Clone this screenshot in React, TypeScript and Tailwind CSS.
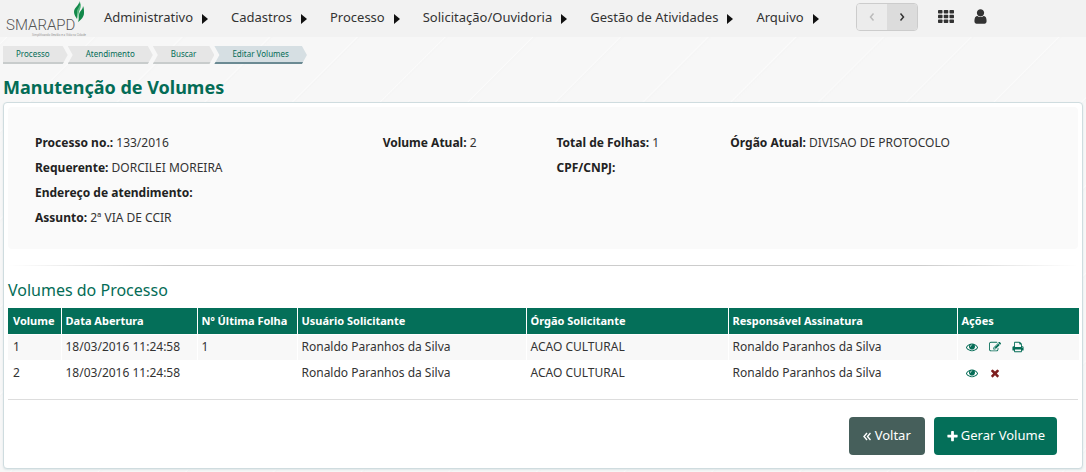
import type { ReactNode } from 'react'
import clsx from 'clsx'

const menuItems = [
  'Administrativo',
  'Cadastros',
  'Processo',
  'Solicitação/Ouvidoria',
  'Gestão de Atividades',
  'Arquivo',
]

const breadcrumbs = ['Processo', 'Atendimento', 'Buscar', 'Editar Volumes']

type Volume = {
  numero: number
  dataAbertura: string
  ultimaFolha: string
  usuario: string
  orgao: string
  responsavel: string
  aberto: boolean
}

const volumes: Volume[] = [
  {
    numero: 1,
    dataAbertura: '18/03/2016 11:24:58',
    ultimaFolha: '1',
    usuario: 'Ronaldo Paranhos da Silva',
    orgao: 'ACAO CULTURAL',
    responsavel: 'Ronaldo Paranhos da Silva',
    aberto: false,
  },
  {
    numero: 2,
    dataAbertura: '18/03/2016 11:24:58',
    ultimaFolha: '',
    usuario: 'Ronaldo Paranhos da Silva',
    orgao: 'ACAO CULTURAL',
    responsavel: 'Ronaldo Paranhos da Silva',
    aberto: true,
  },
]

const icons = {
  eye: 'M1664 960q-152-236-381-353 61 104 61 225 0 185-131.5 316.5t-316.5 131.5-316.5-131.5-131.5-316.5q0-121 61-225-229 117-381 353 133 205 333.5 326.5t434.5 121.5 434.5-121.5 333.5-326.5zm-720-384q0-20-14-34t-34-14q-125 0-214.5 89.5t-89.5 214.5q0 20 14 34t34 14 34-14 14-34q0-86 61-147t147-61q20 0 34-14t14-34zm848 384q0 34-20 69-140 230-376.5 368.5t-499.5 138.5-499.5-139-376.5-368q-20-35-20-69t20-69q140-229 376.5-368t499.5-139 499.5 139 376.5 368q20 35 20 69z',
  edit: 'M888 1184l116-116-152-152-116 116v56h96v96h56zm440-720q-16-16-33 1l-350 350q-17 17-1 33t33-1l350-350q17-17 1-33zm80 594v190q0 119-84.5 203.5t-203.5 84.5h-832q-119 0-203.5-84.5t-84.5-203.5v-832q0-119 84.5-203.5t203.5-84.5h832q63 0 117 25 15 7 18 23 3 17-9 29l-49 49q-14 14-32 8-23-6-45-6h-832q-66 0-113 47t-47 113v832q0 66 47 113t113 47h832q66 0 113-47t47-113v-126q0-13 9-22l64-64q15-15 35-7t20 29zm-96-738l288 288-672 672h-288v-288zm444 132l-92 92-288-288 92-92q28-28 68-28t68 28l152 152q28 28 28 68t-28 68z',
  print:
    'M448 1536h896v-256h-896v256zm0-640h896v-384h-160q-40 0-68-28t-28-68v-160h-640v640zm1152 64q0-26-19-45t-45-19-45 19-19 45 19 45 45 19 45-19 19-45zm128 0v416q0 13-9.5 22.5t-22.5 9.5h-224v160q0 40-28 68t-68 28h-960q-40 0-68-28t-28-68v-160h-224q-13 0-22.5-9.5t-9.5-22.5v-416q0-79 56.5-135.5t135.5-56.5h64v-544q0-40 28-68t68-28h672q40 0 88 20t76 48l152 152q28 28 48 76t20 88v256h64q79 0 135.5 56.5t56.5 135.5z',
  times:
    'M1490 1322q0 40-28 68l-136 136q-28 28-68 28t-68-28l-294-294-294 294q-28 28-68 28t-68-28l-136-136q-28-28-28-68t28-68l294-294-294-294q-28-28-28-68t28-68l136-136q28-28 68-28t68 28l294 294 294-294q28-28 68-28t68 28l136 136q28 28 28 68t-28 68l-294 294 294 294q28 28 28 68z',
  plus: 'M1600 736v192q0 40-28 68t-68 28h-416v416q0 40-28 68t-68 28h-192q-40 0-68-28t-28-68v-416h-416q-40 0-68-28t-28-68v-192q0-40 28-68t68-28h416v-416q0-40 28-68t68-28h192q40 0 68 28t28 68v416h416q40 0 68 28t28 68z',
  user: 'M1536 1399q0 109-62.5 187t-150.5 78h-854q-88 0-150.5-78t-62.5-187q0-85 8.5-160.5t31.5-152 58.5-131 94-89 134.5-34.5q131 128 313 128t313-128q76 0 134.5 34.5t94 89 58.5 131 31.5 152 8.5 160.5zm-256-887q0 159-112.5 271.5t-271.5 112.5-271.5-112.5-112.5-271.5 112.5-271.5 271.5-112.5 271.5 112.5 112.5 271.5z',
}

function Icon({ name, className }: { name: keyof typeof icons; className?: string }) {
  return (
    <svg viewBox="0 0 1792 1792" fill="currentColor" aria-hidden="true" className={className}>
      <path d={icons[name]} />
    </svg>
  )
}

function Chevron({ d }: { d: string }) {
  return (
    <svg viewBox="0 0 8 10" className="h-[10px] w-2" aria-hidden="true">
      <path d={d} fill="none" stroke="currentColor" strokeWidth="1.5" />
    </svg>
  )
}

function Logo() {
  return (
    <a href="#" aria-label="SMARAPD" className="flex h-[37px] w-[98px] shrink-0 items-start">
      <svg viewBox="0 0 84 37" className="h-[37px] w-[84px]">
        <text x="0" y="30" fontSize="15" fontWeight="300" fill="#555" fontFamily="Roboto, sans-serif">
          SMARAPD
        </text>
        <text x="26" y="36" fontSize="3" fill="#999" fontFamily="Roboto, sans-serif">
          Simplificando Gestão e a Vida na Cidade
        </text>
        {/* flame */}
        <path d="M73 1c1 4-5 6-5 11 0 3 2 5 3 7 1-4-1-6 1-9 2-3 3-5 1-9z" fill="#12884a" />
        <path d="M77 6c0 4-4 5-4 9 0 3 0 4-1 7 3-2 6-5 6-9 0-3 0-5-1-7z" fill="#12884a" />
        <path d="M74 2c1 4-3 6-3 10 0 3 1 5 1 8 1-3 0-5 1-8 1-3 3-6 1-10z" fill="#52b47c" />
      </svg>
    </a>
  )
}

function Header() {
  return (
    <header className="flex h-[37px] items-center bg-[#f2f2f2] pl-[6px] text-[#333]">
      <Logo />
      <nav className="flex items-center gap-[23px] pb-1">
        {menuItems.map((item) => (
          <a key={item} href="#" className="flex items-center gap-[9px] whitespace-nowrap text-[13px] leading-5">
            {item}
            <svg viewBox="0 0 6 10" className="mt-1 h-[10px] w-[6px]" aria-hidden="true">
              <path d="M0 0l6 5-6 5z" fill="#111" />
            </svg>
          </a>
        ))}
      </nav>
      <div className="ml-[37px] flex h-7 w-[62px] shrink-0 self-start overflow-hidden rounded border border-[#ccc] mt-[3px]">
        <button type="button" aria-label="Anterior" disabled className="flex flex-1 items-center justify-center bg-[#ececec] text-[#bbb]">
          <Chevron d="M5.5 1.5L2.5 5l3 3.5" />
        </button>
        <button type="button" aria-label="Próximo" className="flex flex-1 items-center justify-center bg-[#dcdcdc] text-[#333]">
          <Chevron d="M2.5 1.5L5.5 5l-3 3.5" />
        </button>
      </div>
      <button type="button" aria-label="Aplicativos" className="ml-5 shrink-0 pb-1">
        <svg viewBox="0 0 16 13" className="h-[13px] w-4" fill="currentColor" aria-hidden="true">
          {[0, 4.75, 9.5].map((y) =>
            [0, 5.75, 11.5].map((x) => <rect key={`${x}-${y}`} x={x} y={y} width="4.5" height="3.5" rx="0.7" />),
          )}
        </svg>
      </button>
      <button type="button" aria-label="Usuário" className="ml-[18px] shrink-0 pb-1">
        <Icon name="user" className="size-[17px]" />
      </button>
    </header>
  )
}

function Breadcrumbs() {
  return (
    <nav aria-label="Trilha" className="flex px-[3px] pt-[9px] text-[8px] leading-4 text-[#046c56]">
      {breadcrumbs.map((item, index) => (
        <a
          key={item}
          href="#"
          className={clsx(
            'border-b-2 pr-[18px]',
            index === 0
              ? 'pl-[13px] [clip-path:polygon(0_0,calc(100%-5px)_0,100%_50%,calc(100%-5px)_100%,0_100%)]'
              : 'pl-[18px] [clip-path:polygon(0_0,calc(100%-5px)_0,100%_50%,calc(100%-5px)_100%,0_100%,5px_50%)]',
            index === breadcrumbs.length - 1 ? 'border-[#6b8a93] bg-[#d6dfe3]' : 'border-[#c8cccc] bg-[#e6e6e6]',
          )}
        >
          {item}
        </a>
      ))}
    </nav>
  )
}

function Field({ label, children, className }: { label: string; children?: ReactNode; className: string }) {
  return (
    <div className={className}>
      <dt className="inline font-bold text-[#222]">{label}</dt> <dd className="inline">{children}</dd>
    </div>
  )
}

function ActionButton({ icon, label, danger }: { icon: keyof typeof icons; label: string; danger?: boolean }) {
  return (
    <button type="button" aria-label={label} className={danger ? 'text-[#7d1f1f]' : 'text-[#046c56]'}>
      <Icon name={icon} className="size-3" />
    </button>
  )
}

function VolumesTable() {
  return (
    <table className="w-full table-fixed text-left text-[12px] leading-4 text-[#333]">
      <colgroup>
        <col className="w-[53px]" />
        <col className="w-[136px]" />
        <col className="w-[100px]" />
        <col className="w-[229px]" />
        <col className="w-[202px]" />
        <col className="w-[229px]" />
        <col className="w-[122px]" />
      </colgroup>
      <thead className="bg-[#046f59] text-[11px] text-white">
        <tr className="[&>th]:h-[26px] [&>th]:whitespace-nowrap [&>th]:border-b [&>th]:border-l [&>th]:border-white [&>th]:pl-1 [&>th:first-child]:border-l-0 [&>th:first-child]:pl-[5px]">
          <th>Volume</th>
          <th>Data Abertura</th>
          <th>Nº Última Folha</th>
          <th>Usuário Solicitante</th>
          <th>Órgão Solicitante</th>
          <th>Responsável Assinatura</th>
          <th>Ações</th>
        </tr>
      </thead>
      <tbody>
        {volumes.map((v) => (
          <tr
            key={v.numero}
            className="odd:bg-[#f8f8f8] [&>td]:h-[26px] [&>td]:whitespace-nowrap [&>td]:border-l [&>td]:border-white [&>td]:pl-1 [&>td:first-child]:border-l-0 [&>td:first-child]:pl-[5px]"
          >
            <td>{v.numero}</td>
            <td>{v.dataAbertura}</td>
            <td>{v.ultimaFolha}</td>
            <td>{v.usuario}</td>
            <td>{v.orgao}</td>
            <td>{v.responsavel}</td>
            <td>
              <div className="flex items-center gap-[11px] pl-1">
                <ActionButton icon="eye" label="Visualizar" />
                {v.aberto ? (
                  <ActionButton icon="times" label="Excluir" danger />
                ) : (
                  <>
                    <ActionButton icon="edit" label="Editar" />
                    <ActionButton icon="print" label="Imprimir" />
                  </>
                )}
              </div>
            </td>
          </tr>
        ))}
      </tbody>
    </table>
  )
}

export default function App() {
  return (
    <div className="min-h-screen bg-[#f7f7f7] bg-[repeating-linear-gradient(135deg,#f7f7f7_0,#f7f7f7_30px,#fbfbfb_31px,#f5f5f5_32px,#f7f7f7_34px,#f7f7f7_62px)] pb-1 font-['Noto_Sans','Open_Sans',sans-serif]">
      <Header />
      <Breadcrumbs />
      <h1 className="px-[3px] pt-[11px] pb-[3px] text-[18px] leading-6 font-bold text-[#046c56]">
        Manutenção de Volumes
      </h1>

      <main className="mx-[3px] rounded border border-[#cfdcdf] bg-white px-1 pt-1 shadow-[0_1px_2px_#dde5e7]">
        <dl className="grid min-h-[142px] grid-cols-12 content-start rounded bg-[#fafafa] pt-[23px] pl-[27px] text-[12px] leading-[25px] text-[#333]">
          <Field label="Processo no.:" className="col-span-4">
            133/2016
          </Field>
          <Field label="Volume Atual:" className="col-span-2">
            2
          </Field>
          <Field label="Total de Folhas:" className="col-span-2">
            1
          </Field>
          <Field label="Órgão Atual:" className="col-span-4">
            DIVISAO DE PROTOCOLO
          </Field>
          <Field label="Requerente:" className="col-span-6">
            DORCILEI MOREIRA
          </Field>
          <Field label="CPF/CNPJ:" className="col-span-6" />
          <Field label="Endereço de atendimento:" className="col-span-12" />
          <Field label="Assunto:" className="col-span-12">
            2ª VIA DE CCIR
          </Field>
        </dl>

        <div className="mt-4 h-px bg-[linear-gradient(to_right,transparent,#ccc_15%,#ccc_85%,transparent)]" />

        <h2 className="pt-3 pb-[6px] text-[16px] leading-6 text-[#046c56]">Volumes do Processo</h2>
        <VolumesTable />

        <div className="mt-[13px] flex justify-end gap-[9px] border-t border-[#ddd] pt-[17px] pr-[21px] pb-[13px] text-[13px] text-white">
          <button type="button" className="flex h-[38px] items-center gap-1 rounded bg-[#465f5b] px-[14px]">
            <svg viewBox="0 0 8 9" className="h-[9px] w-2" aria-hidden="true">
              <path d="M4 1L1 4.5l3 3.5M7.5 1l-3 3.5 3 3.5" fill="none" stroke="currentColor" strokeWidth="1.4" />
            </svg>
            Voltar
          </button>
          <button type="button" className="flex h-[38px] items-center gap-[2px] rounded bg-[#046f59] px-3">
            <Icon name="plus" className="size-[13px]" />
            Gerar Volume
          </button>
        </div>
      </main>
    </div>
  )
}
